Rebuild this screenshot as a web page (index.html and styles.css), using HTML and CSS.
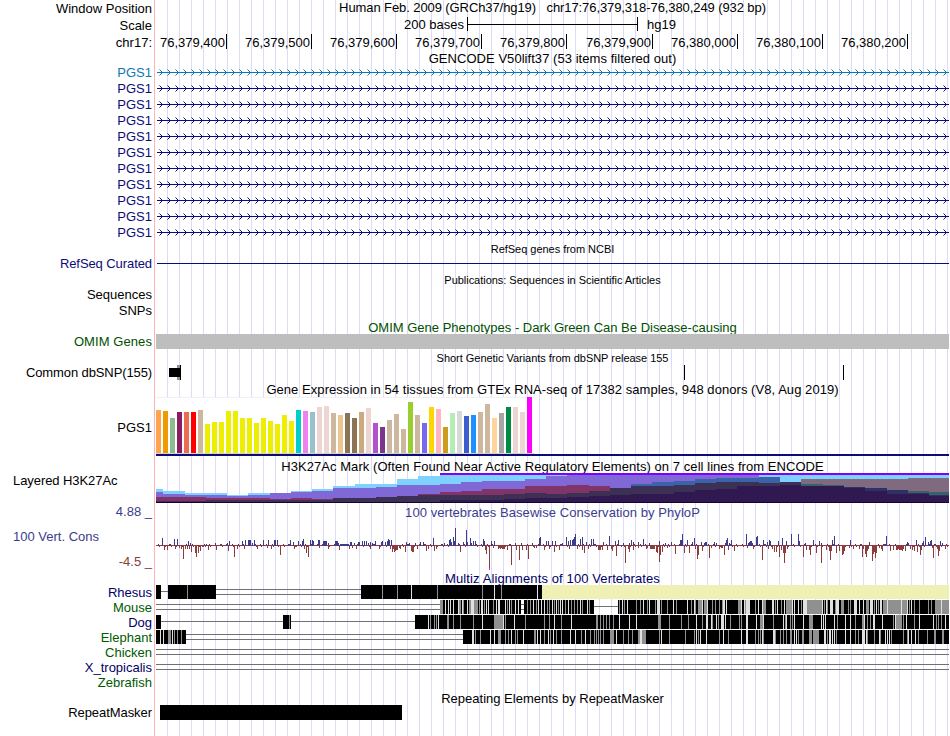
FILE: index.html
```html
<!DOCTYPE html>
<html lang="en">
<head>
<meta charset="utf-8">
<title>Genome Browser - chr17:76,379,318-76,380,249</title>
<link rel="stylesheet" href="styles.css">
</head>
<body>
<main class="browser" id="browser">
  <section class="row position"><div class="label">Window Position</div><div class="title pre">Human Feb. 2009 (GRCh37/hg19)   chr17:76,379,318-76,380,249 (932 bp)</div></section>
  <section class="row scale"><div class="label">Scale</div><div class="track scale-track"><span>200 bases</span><span class="scale-bar"></span><span>hg19</span></div></section>
  <section class="row ruler"><div class="label">chr17:</div><div class="track ticks"><span class="first">76,379,400</span><span>76,379,500</span><span>76,379,600</span><span>76,379,700</span><span>76,379,800</span><span class="wide">76,379,900</span><span>76,380,000</span><span>76,380,100</span><span>76,380,200</span></div></section>
  <section class="row gencode-title"><div></div><div class="title">GENCODE V50lift37 (53 items filtered out)</div></section>
  <section class="row gene light"><div class="label">PGS1</div><div class="track" data-gene="#0c78b4"></div></section>
  <section class="row gene"><div class="label">PGS1</div><div class="track" data-gene="#0c0c78"></div></section>
  <section class="row gene"><div class="label">PGS1</div><div class="track" data-gene="#0c0c78"></div></section>
  <section class="row gene"><div class="label">PGS1</div><div class="track" data-gene="#0c0c78"></div></section>
  <section class="row gene"><div class="label">PGS1</div><div class="track" data-gene="#0c0c78"></div></section>
  <section class="row gene"><div class="label">PGS1</div><div class="track" data-gene="#0c0c78"></div></section>
  <section class="row gene"><div class="label">PGS1</div><div class="track" data-gene="#0c0c78"></div></section>
  <section class="row gene"><div class="label">PGS1</div><div class="track" data-gene="#0c0c78"></div></section>
  <section class="row gene"><div class="label">PGS1</div><div class="track" data-gene="#0c0c78"></div></section>
  <section class="row gene"><div class="label">PGS1</div><div class="track" data-gene="#0c0c78"></div></section>
  <section class="row gene"><div class="label">PGS1</div><div class="track" data-gene="#0c0c78"></div></section>
  <section class="row refseq-title"><div></div><div class="title small">RefSeq genes from NCBI</div></section>
  <section class="row refseq"><div class="label navy">RefSeq Curated</div><div class="track" id="refseq"></div></section>
  <section class="row pubs-title"><div></div><div class="title small">Publications: Sequences in Scientific Articles</div></section>
  <section class="row pubs"><div class="label">Sequences</div></section>
  <section class="row pubs"><div class="label">SNPs</div></section>
  <section class="row omim-title"><div></div><div class="title green">OMIM Gene Phenotypes - Dark Green Can Be Disease-causing</div></section>
  <section class="row omim"><div class="label green">OMIM Genes</div><div class="omim-bar"></div></section>
  <section class="row snp-title"><div></div><div class="title small">Short Genetic Variants from dbSNP release 155</div></section>
  <section class="row snp"><div class="label">Common dbSNP(155)</div><div class="track" id="snp"></div></section>
  <section class="row gtex-title"><div></div><div class="title">Gene Expression in 54 tissues from GTEx RNA-seq of 17382 samples, 948 donors (V8, Aug 2019)</div></section>
  <section class="row gtex"><div class="label">PGS1</div><div class="track" id="gtex"></div></section>
  <section class="row mark-title"><div></div><div class="title">H3K27Ac Mark (Often Found Near Active Regulatory Elements) on 7 cell lines from ENCODE</div></section>
  <section class="row mark"><div class="label left">Layered H3K27Ac</div><div class="track" id="mark"></div></section>
  <section class="row cons">
    <div class="cons-labels"><div class="label blue">4.88 _</div><div class="label left blue">100 Vert. Cons</div><div class="label red">-4.5 _</div></div>
    <div class="track"><div class="title blue">100 vertebrates Basewise Conservation by PhyloP</div><div id="cons"></div></div>
  </section>
  <section class="row multiz-title"><div></div><div class="title dark">Multiz Alignments of 100 Vertebrates</div></section>
  <section class="row align"><div class="label dark">Rhesus</div><div class="track" id="rhesus"></div></section>
  <section class="row align"><div class="label forest">Mouse</div><div class="track" id="mouse"></div></section>
  <section class="row align"><div class="label dark">Dog</div><div class="track" id="dog"></div></section>
  <section class="row align"><div class="label forest">Elephant</div><div class="track" id="elephant"></div></section>
  <section class="row align"><div class="label forest">Chicken</div><div class="track" id="chicken"></div></section>
  <section class="row align"><div class="label dark">X_tropicalis</div><div class="track" id="xtrop"></div></section>
  <section class="row align"><div class="label forest">Zebrafish</div></section>
  <section class="row repeat-title"><div></div><div class="title">Repeating Elements by RepeatMasker</div></section>
  <section class="row repeat"><div class="label">RepeatMasker</div><div class="repeat-bar"></div></section>
</main>
<script src="tracks.js"></script>
</body>
</html>
```
FILE: styles.css
```css
body { margin: 0; background: #fff; }
.browser {
  width: 949px;
  height: 736px;
  overflow: hidden;
  font: 13px/15px "Liberation Sans", Arial, sans-serif;
  color: #000;
  background:
    linear-gradient(#ffb4b4, #ffb4b4) 154px 0 / 1px 100% no-repeat,
    repeating-linear-gradient(90deg, transparent 0 11px, #dcdcf8 11px 12px) 156px 0 / 793px 100% no-repeat;
}
.row { display: grid; grid-template-columns: 156px 793px; align-items: start; white-space: nowrap; }
.label { text-align: right; padding-right: 4px; }
.label.left { text-align: left; padding-left: 13px; }
.title { text-align: center; }
.pre { white-space: pre; }
.small { font-size: 11px; line-height: 12px; letter-spacing: -0.03px; }
svg { display: block; shape-rendering: crispEdges; }

.navy { color: #0c0c78; }
.green { color: #005000; }
.blue { color: #3c3c8c; }
.red { color: #8c3c3c; }
.dark { color: #000064; }
.forest { color: #005a00; }

.position { height: 16px; }
.position .label { padding-top: 1px; }
.position .title { letter-spacing: -0.09px; }
.scale { height: 17px; }
.scale .label { padding-top: 2px; }
.scale-track { display: flex; padding: 1px 0 0 248px; }
.scale-bar {
  width: 169px;
  height: 14px;
  margin: 0 9px 0 3px;
  border: solid #000;
  border-width: 0 1px;
  background: linear-gradient(#000, #000) 0 7px / 100% 1px no-repeat;
}
.ruler { height: 17px; }
.ruler .label { padding-top: 2px; }
.ticks { display: flex; padding-top: 1px; }
.ticks span { box-sizing: border-box; width: 85px; border-right: 1px solid #000; padding: 1px 1px 0 0; text-align: right; height: 15px; }
.ticks .first { width: 71px; }
.ticks .wide { width: 86px; }
.gencode-title { height: 15px; }
.gencode-title .title { padding-top: 1px; letter-spacing: 0.05px; }
.gene { height: 16px; color: #0c0c78; }
.gene.light { color: #0c78b4; }
.refseq-title { height: 14px; }
.refseq-title .title { padding-top: 2px; }
.refseq { height: 18px; }
.refseq .label { padding-top: 1px; letter-spacing: -0.08px; }
.pubs-title { height: 14px; }
.pubs-title .title { padding-top: 1px; }
.pubs { height: 16px; }
.omim-title { height: 15px; }
.omim-title .title { padding-top: 1px; }
.omim { height: 16px; }
.omim .label { letter-spacing: 0.08px; }
.omim-bar { height: 15px; background: #bebebe; }
.snp-title { height: 14px; }
.snp-title .title { padding-top: 2px; }
.snp { height: 17px; }
.snp .label { padding-top: 1px; letter-spacing: -0.11px; }
.gtex-title { height: 15px; }
.gtex-title .title { padding-top: 1px; letter-spacing: 0.055px; }
.gtex { height: 62px; }
.gtex .label { padding-top: 24px; }
.mark-title { height: 15px; }
.mark-title .title { padding-top: 1px; letter-spacing: 0.058px; }
.mark { height: 31px; }
.mark .label { letter-spacing: -0.07px; }
.cons { height: 66px; }
.cons .title { padding-top: 1px; letter-spacing: 0.06px; }
.cons-labels { display: grid; gap: 10px; }
.multiz-title { height: 15px; }
.multiz-title .title { padding-top: 1px; letter-spacing: 0.11px; }
.align { height: 15px; }
.repeat-title { height: 15px; }
.repeat-title .title { padding-top: 1px; }
.repeat { height: 31px; }
.repeat .label { letter-spacing: -0.06px; }
.repeat-bar { width: 242px; height: 15px; margin-left: 4px; background: #000; }
```
FILE: tracks.js
```js
// All x values are browser pixels; tracks begin at LEFT and end at RIGHT.
const LEFT = 156, RIGHT = 949;

function rect(x, y, w, h, fill) {
  return `<rect x="${x}" y="${y}" width="${w}" height="${h}" fill="${fill}"/>`;
}
function draw(el, top, height, shapes) {
  el.innerHTML = `<svg width="${RIGHT - LEFT}" height="${height}" viewBox="${LEFT} ${top} ${RIGHT - LEFT} ${height}">${shapes}</svg>`;
}
const byId = id => document.getElementById(id);

// Gene introns: a line with strand arrows every 8 pixels.
document.querySelectorAll('[data-gene]').forEach(el => {
  const c = el.dataset.gene;
  let s = rect(157, 7, RIGHT - 157, 1, c);
  for (let x = 162; x < RIGHT; x += 8) {
    for (const d of [1, 2]) s += rect(x - d, 7 - d, 1, 1, c) + rect(x - d, 7 + d, 1, 1, c);
    s += `<g opacity=".5">${rect(x - 3, 4, 1, 1, c)}${rect(x - 3, 10, 1, 1, c)}</g>`;
  }
  draw(el, 0, 16, s);
});

draw(byId('refseq'), 255, 18, rect(157, 263, RIGHT - 157, 1, '#0c0c78'));
draw(byId('snp'), 364, 17,
  rect(177, 365, 3, 15, '#909090') + rect(169, 368, 11, 9, '#000') +
  rect(180, 365, 1, 15, '#000') + rect(684, 365, 1, 15, '#000') + rect(843, 365, 1, 15, '#000'));

// Tissue expression: height and colour of each bar.
const tissueTops = [410,411,418,412,412,412,410,424,422,422,411,411,418,418,423,418,421,424,415,421,410,411,412,407,406,413,415,413,418,412,408,423,427,420,414,429,402,415,423,407,409,427,413,411,416,415,412,404,418,413,407,407,412,397];
const tissueColors = ('ffa54f ee9a00 8fbc8f 8b1c62 ee6a50 ff0000 cdb79e ' + 'eeee00 '.repeat(13) +
  '00cdcd ee82ee 9ac0cd eed5d2 eed5d2 cdb79e eec591 8b7355 8b7355 cdaa7d eed5d2 b452cd 7a378b cdb79e cdb79e cdb79e 9acd32 cdb79e 7a67ee ffd700 ffb6c1 cd9b1d b4eeb4 d9d9d9 3a5fcd 1e90ff cdb79e cdb79e ffd39b a6a6a6 008b45 eed5d2 eed5d2 ff00ff').split(' ');
let bars = rect(156, 397, 378, 57, '#fff') + rect(156, 397, 378, 1, '#f0f0f0') + rect(156, 453, 378, 1, '#d2d2d2');
tissueTops.forEach((t, i) => { bars += rect(156 + i * 7, t, 5, 453 - t, '#' + tissueColors[i]); });
draw(byId('gtex'), 396, 62, bars + rect(156, 454, 793, 2, '#0c0c78'));

// Stacked signal layers: [start x, top y] steps, filled down to the base.
const layers = [
  ['#7fd1ff', [[156,489],[163,491],[185,493],[227,495],[248,493],[291,491],[312,489],[333,486],[355,484],[397,479],[418,476],[440,475]]],
  ['#8069d6', [[156,492],[163,494],[185,495],[227,496],[248,495],[270,493],[291,492],[312,491],[333,488],[376,487],[397,485],[440,484],[461,482],[482,481],[525,479],[546,476],[567,475],[759,503]]],
  ['#3c62aa', [[631,484],[652,482],[674,481],[695,479],[716,478],[759,477],[780,503]]],
  ['#806a80', [[801,479],[908,478]]],
  ['#803468', [[156,497],[206,498],[270,499],[291,498],[312,499],[333,503],[418,494],[440,492],[461,491],[482,489],[525,486],[567,485],[589,486],[610,503]]],
  ['#3a6068', [[801,484],[823,485],[844,487],[865,490],[887,490],[908,491],[929,492]]],
  ['#3c3054', [[156,501],[206,500],[333,498],[376,497],[397,496],[418,495],[504,494],[525,493],[546,494],[567,493],[589,491],[610,488],[631,486],[674,485],[695,483],[716,482],[759,483],[780,482],[801,486],[823,503]]],
  ['#303068', [[823,486],[844,487],[865,488],[887,490],[908,493],[929,495]]],
  ['#301850', [[156,502],[440,500],[504,499],[525,498],[567,497],[589,496],[610,495],[631,494],[674,492],[695,490],[716,489],[737,486],[780,485],[801,486],[844,488],[865,491],[887,494],[929,496]]],
  ['#180030', [[156,502]]]
];
let mark = '';
for (const [color, steps] of layers) {
  steps.forEach(([x, y], i) => {
    const end = i + 1 < steps.length ? steps[i + 1][0] : RIGHT;
    if (y < 503) mark += rect(x, y, end - x, 503 - y, color);
  });
}
draw(byId('mark'), 473, 31, mark + rect(440, 473, 509, 2, '#8000ff'));

// Conservation scores: "offset:height" pairs in each segment, above and below zero.
const scores = [
  [150, '12:7 8:1 24:6 27:6 38:4 40:2 56:1 65:2 77:2 79:4 92:4 95:5 98:5 99:5 100:5 102:2 104:5 113:5 118:5 124:5 125:5 127:5 140:5 143:3 148:4 152:4 153:6 160:5 162:5 163:4 168:5 169:5 173:4 174:4 175:4 176:4 178:2 185:4 186:4 187:4 188:2 190:1 191:1 192:1 193:1 194:1 195:1 196:1 197:1 198:1 200:3 201:3 204:2 208:3 209:3 212:4 214:4 216:4 218:2 220:3 222:2 225:4 231:3 232:4 235:3 237:4 238:6 239:5 241:5 256:3 259:2 265:2',
   '14:5 17:5 25:4 29:3 31:4 33:14 35:4 37:4 39:4 41:7 45:8 46:12 48:8 50:6 52:2 53:2 58:5 66:5 78:6 84:12 87:4 94:4 107:4 117:3 121:4 130:10 144:4 146:2 154:4 156:8 158:12 169:3 178:4 189:5 199:4 202:3 206:4 220:4 229:4 240:4 242:7 243:4 244:7 245:6 246:5 247:5 249:3 250:4 255:7 261:6 262:7 263:7'],
  [415, '5:3 8:3 18:7 29:2 34:5 35:6 36:3 38:8 39:4 40:17 43:2 48:3 51:15 52:3 55:7 56:2 58:4 60:4 68:6 69:4 76:4 79:4 100:2 106:2 117:2 124:7 125:8 131:4 133:4 137:4 140:4 147:2 151:8 153:4 155:5 157:5 158:6 159:8 160:11 165:6 167:8 171:3 176:6 178:6 188:3 194:9 200:4 203:5 208:2 214:2 216:5 218:3 223:3 228:6 234:2 244:4 250:2 256:3 265:5 266:7 267:11',
   '2:4 11:6 13:4 19:6 21:4 45:7 70:5 71:9 74:23 78:3 83:4 84:3 85:4 86:3 87:4 88:4 89:4 92:5 96:20 101:5 104:15 107:5 111:5 113:14 119:3 121:3 129:5 134:4 139:7 144:5 154:4 162:4 167:5 169:8 173:4 183:5 184:5 185:5 187:5 192:5 196:4 197:6 201:11 206:2 210:18 213:4 214:7 218:5 223:3 231:4 232:3 235:4 236:4 237:4 238:4 239:4 241:7 242:8 244:17 245:10 247:7 252:3 260:9'],
  [680, '1:5 2:11 7:5 12:3 14:7 21:3 24:2 25:3 26:3 34:3 36:2 45:2 46:5 47:7 49:2 51:5 66:11 68:2 69:3 70:4 71:4 72:2 76:8 77:9 83:5 87:3 89:5 90:4 98:4 102:7 106:4 111:11 118:11 119:4 125:2 133:5 139:4 141:2 152:5 154:9 170:5 180:1 189:3 205:1 206:9 227:3 228:2 236:5 242:2 243:4 245:8 248:3 250:4 251:5 260:4 262:2',
   '4:8 9:8 15:4 17:14 18:10 22:6 29:13 31:3 39:4 41:3 42:3 44:10 48:5 54:6 67:3 73:4 82:15 88:4 92:4 94:7 96:7 99:12 101:5 103:8 104:18 105:8 107:4 123:12 126:5 129:5 130:10 136:8 141:18 146:5 149:6 150:15 151:6 156:8 159:6 162:10 163:9 164:6 169:3 173:4 179:4 182:12 183:4 185:9 186:12 187:6 188:4 192:16 193:9 194:7 195:13 196:8 199:3 201:4 202:6 210:6 213:5 216:5 217:5 218:4 219:5 220:5 221:5 222:6 223:4 225:6 230:4 232:5 234:6 237:7 240:10 241:5 252:3 253:13 257:4 258:11 259:6 265:4']
];
const up = {}, down = {};
for (const [origin, above, below] of scores) {
  for (const [map, text] of [[up, above], [down, below]]) {
    for (const pair of text.split(' ')) {
      const [dx, h] = pair.split(':').map(Number);
      map[origin + dx] = h;
    }
  }
}
let cons = '';
for (let x = LEFT; x < RIGHT; x++) {
  const n = (x * 7919) % 17;
  const a = up[x] || (!down[x] && n < 4 ? 1 : 0);
  const b = down[x] || (!up[x] ? (n > 13 ? 2 : 1) : 0);
  if (a) cons += rect(x, 545 - a, 1, a, '#3c3c8c');
  if (b) cons += rect(x, 545, 1, b, '#8c3c3c');
  else cons += rect(x, 545, 1, 1, '#3c3c8c');
}
draw(byId('cons'), 520, 50, cons + rect(489, 568, 1, 2, '#ff00ff'));

// Alignments: black blocks, gap lines and shaded stripes ("start[-end]shade").
const shades = { g: '#909090', l: '#e0e0e0', w: '#ffffff', d: '#404040' };
function align(id, top, blocks, doubles, singles, stripes) {
  let s = '';
  for (const [a, b] of doubles) s += rect(a, top + 4, b - a, 1, '#707070') + rect(a, top + 9, b - a, 1, '#707070');
  for (const [a, b] of singles) s += rect(a, top + 6, b - a, 1, '#707070');
  for (const [a, b, c] of blocks) s += rect(a, top, b - a, 14, c || '#000');
  for (const [origin, text] of stripes) {
    for (const m of text.matchAll(/(\d+)(?:-(\d+))?([glwd])/g)) {
      const a = +m[1], b = m[2] ? +m[2] : a;
      s += rect(origin + a, top, b - a + 1, 14, shades[m[3]]);
    }
  }
  draw(byId(id), top, 15, s);
}
align('rhesus', 585, [[156,161],[168,216],[361,542],[542,949,'#f0f0b4']], [[216,361]], [[161,168]],
  [[150, '37g 232g 247g'], [410, '1l 27g 72g 84l 91g 127l']]);
align('mouse', 600, [[440,521],[524,594],[618,949]], [[156,440],[521,524]], [[594,618]],
  [[410, '30-32g 35l 38l 40l 43l 48l 49-50g 52l 53g 57l 59-60g 61-63l 64-67g 69g 71l 74g 76l 78l 83g 86l 88-89l 95l 97g 99l 101g 105l 108l 117g 120g 123l 126g 128l 131l 134l 137g 139g 142l 144g 146l 148g 150l 152l 155g 158l 161g 164g 167g 170l 172g 177l 179g 72l 209g 212l 214g 217l 226g 230g 233l 237g 239l 245g 247-249l 251g 257g 263l 266g'],
   [680, '7l 11g 14l 15g 18-21g 22l 24-26g 27l 32g 35g 39g 42g 43-44l 46l 58-60g 61l 64l 65g 66-69l 75g 78l 82l 83-85g 92-93l 95g 97l 101g 104l 106g 107-111g 112l 114l 118l 121g 123-126l 127-141g 142l 144g 146l 147g 150-152l 155g 156-158l 161-163g 168g 170g 174-176l 179l 183l 186-188g 190-192l 194g 196l 198g 200-201l 203-206g 207l 208-220g 221l 222-226g 227l 229g 231l 234g 239g 248g 251g 255-260g 261l 262-268g']]);
align('dog', 615, [[156,161],[283,291],[415,949]], [], [[161,283],[291,415]],
  [[280, '9g'],
   [410, '18l 20g 24g 26g 28l 37-38g 43g 50g 63g 72l 84-92g 93l 95g 104l 115g 134g 139g 144l 151g 161l 186-187g 190g 193g 196g 199g 203g 209l 219l 226l 248-250g 259g'],
   [680, '1g 8g 16l 22g 26-27l 31l 32g 36l 38g 41-43l 45l 50g 59g 61g 66-67l 76l 80-82g 83l 93g 103l 105g 106l 110g 112g 114l 123l 129-132g 141l 143l 145l 154l 157g 165l 170l 175g 182-183g 184l 187g 190g 193-194l 202l 213g 215l 216-221g 223g 226l 234g 239l 253l 256g 258g 261g 265l']]);
align('elephant', 630, [[156,186],[463,949]], [[186,463]], [],
  [[150, '10l 13l 18-20g 22l 24g 27g 31g'],
   [410, '62-63l 65g 70g 80l 84l 88-90g 95g 98g 101l 105g 107g 113l 124-125g 127l 130l 134g 138l 140g 143l 146g 151g 160l 165l 171g 175l 180g 184g 186g 188g 190g 193g 200-203g 206l 213g 218g 222g 228-229g 230-231l 232-235g 249g 251l 259g'],
   [680, '5g 14g 16l 18g 20l 26l 39g 43l 48g 61l 66-67l 75g 78g 80g 82l 83g 93-94l 95g 100g 103g 106g 110-111g 114l 116l 118g 122-123g 129-131g 133-138g 144-145l 147g 149-150l 152l 154l 156g 165l 170l 175g 178g 182-184l 186l 187g 194g 199l 200g 205l 207l 209l 211g 223g 227g 228l 231l 235l 238g 247g 254-255g 262-263g']]);
align('chicken', 645, [], [[156, 949]], [], []);
align('xtrop', 660, [], [[156, 949]], [], []);
```
